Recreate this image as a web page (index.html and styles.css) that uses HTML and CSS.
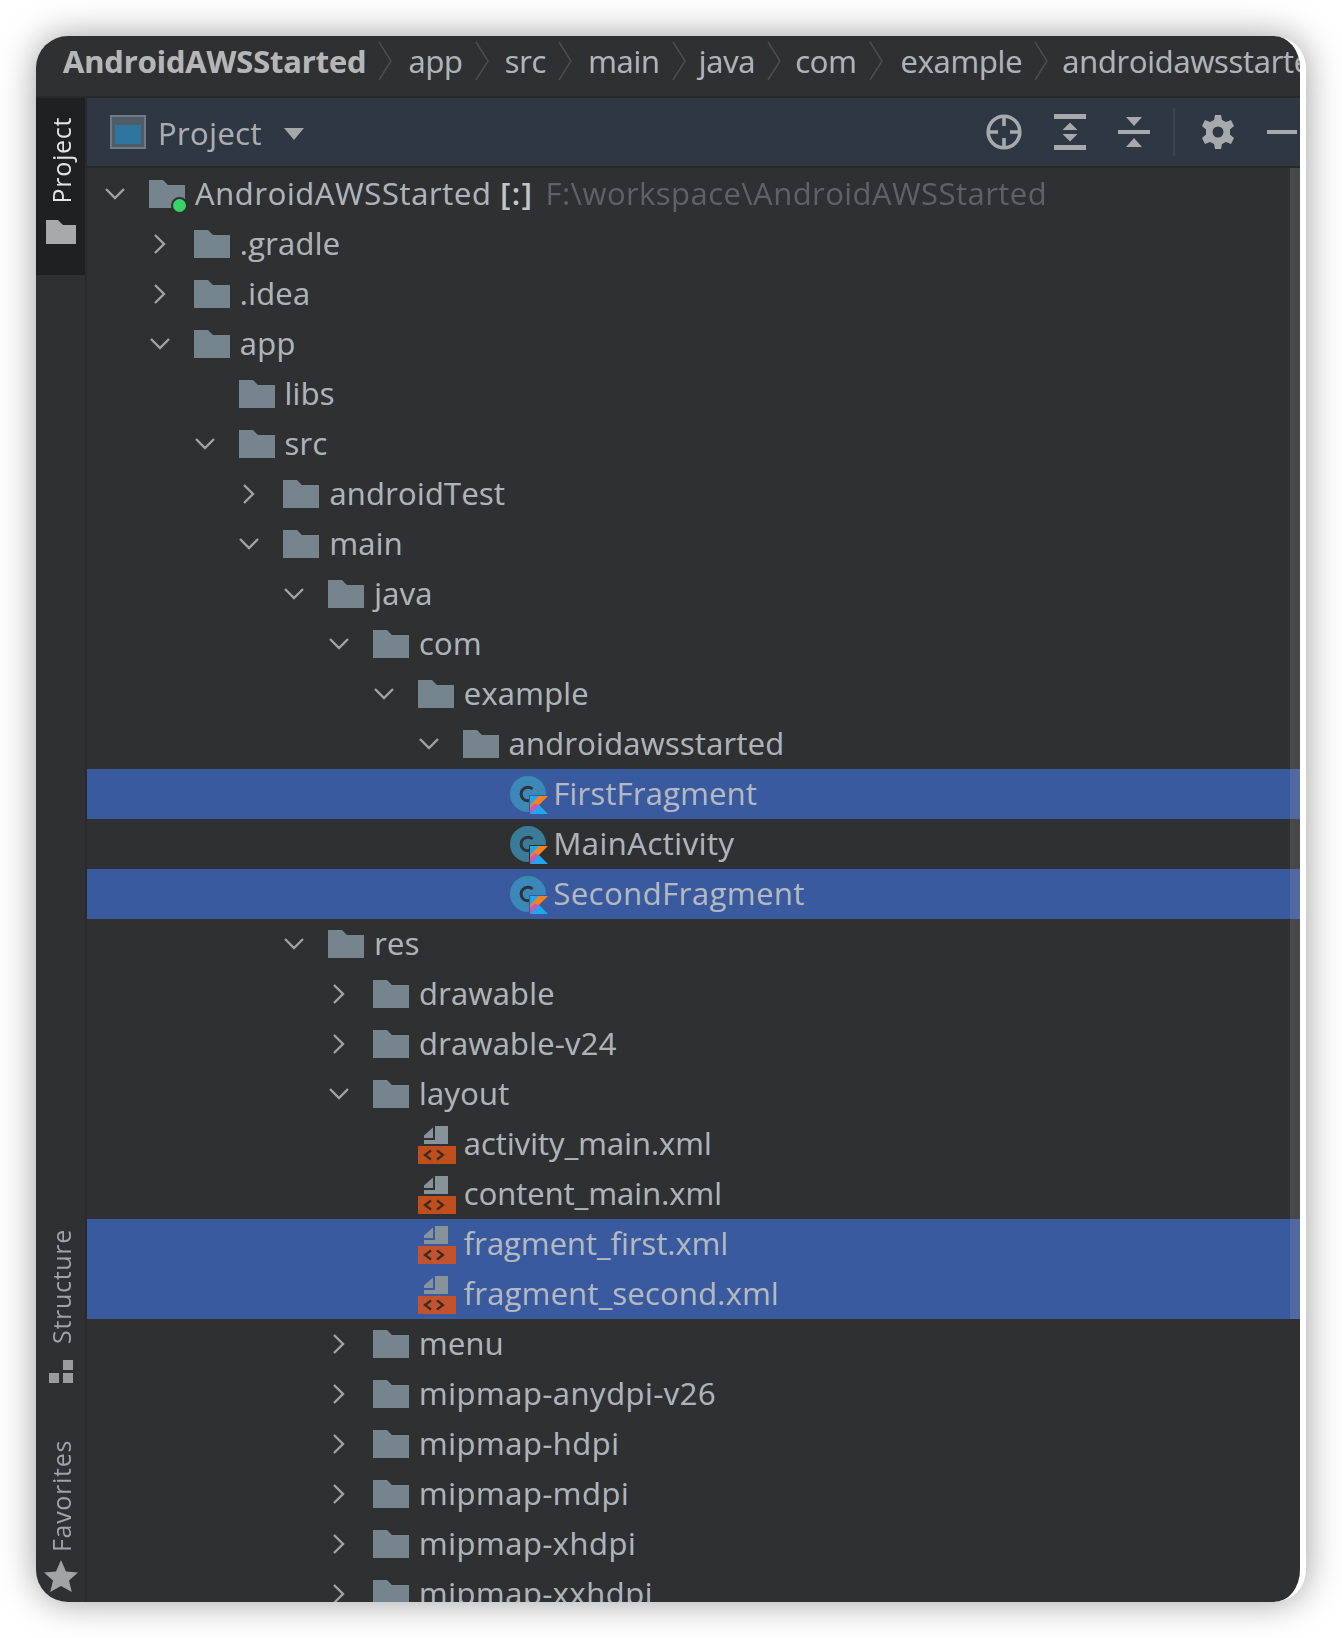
FILE: index.html
```html
<!DOCTYPE html>
<html lang="en">
<head>
<meta charset="utf-8">
<title>AndroidAWSStarted</title>
<link rel="stylesheet" href="styles.css">
</head>
<body>
<svg class="defs" width="0" height="0" aria-hidden="true">
  <symbol id="folder" viewBox="0 0 36 28"><path d="M0 0h14l5 5h17v23H0z" fill="#76848d"/></symbol>
  <symbol id="open" viewBox="0 0 24 24"><path d="M3 7l9 9 9-9" fill="none" stroke="#a0a2a4" stroke-width="2.4"/></symbol>
  <symbol id="closed" viewBox="0 0 24 24"><path d="M7 3l9 9-9 9" fill="none" stroke="#a0a2a4" stroke-width="2.4"/></symbol>
  <symbol id="cls" viewBox="0 0 40 40">
    <circle cx="18" cy="18" r="18" fill="var(--cls)"/>
    <path d="M22.500 13a6.800 6.800 0 1 0 0 10" fill="none" stroke="#2f3236" stroke-width="3"/>
    <path d="M19 19h20v20H19z" fill="var(--kbg)"/>
    <path d="M20 20h18L20 38z" fill="#f58220"/>
    <path d="M20 20h9L20 29z" fill="#1fa8f0"/>
    <path d="M20 38l9-9 9 9z" fill="#1fa8f0"/>
    <path d="M20 38v-6l4.500-4.500 4.500 1.500z" fill="#c757bc"/>
  </symbol>
  <symbol id="xml" viewBox="0 0 38 38">
    <path d="M17 0h13v18H6v-4h11zM15 1.500V12H6V9.500z" fill="#87939b"/>
    <rect x="0" y="20" width="38" height="18" fill="var(--xml)"/>
    <path d="M13 24.500L7 29l6 4.500M19 24.500l6 4.500-6 4.500" fill="none" stroke="#3d2a20" stroke-width="2.200"/>
  </symbol>
</svg>

<main class="window">
  <header class="crumbs">
    <span class="crumb crumb-root">AndroidAWSStarted</span>
    <svg class="sep" viewBox="0 0 14 40"><path d="M1 1l12 19L1 39" fill="none" stroke="#4b4d4f" stroke-width="1.500"/></svg>
    <span class="crumb">app</span>
    <svg class="sep" viewBox="0 0 14 40"><path d="M1 1l12 19L1 39" fill="none" stroke="#4b4d4f" stroke-width="1.500"/></svg>
    <span class="crumb">src</span>
    <svg class="sep" viewBox="0 0 14 40"><path d="M1 1l12 19L1 39" fill="none" stroke="#4b4d4f" stroke-width="1.500"/></svg>
    <span class="crumb">main</span>
    <svg class="sep" viewBox="0 0 14 40"><path d="M1 1l12 19L1 39" fill="none" stroke="#4b4d4f" stroke-width="1.500"/></svg>
    <span class="crumb crumb-java">java</span>
    <svg class="sep" viewBox="0 0 14 40"><path d="M1 1l12 19L1 39" fill="none" stroke="#4b4d4f" stroke-width="1.500"/></svg>
    <span class="crumb crumb-com">com</span>
    <svg class="sep" viewBox="0 0 14 40"><path d="M1 1l12 19L1 39" fill="none" stroke="#4b4d4f" stroke-width="1.500"/></svg>
    <span class="crumb crumb-example">example</span>
    <svg class="sep" viewBox="0 0 14 40"><path d="M1 1l12 19L1 39" fill="none" stroke="#4b4d4f" stroke-width="1.500"/></svg>
    <span class="crumb crumb-com">androidawsstarted</span>
  </header>

  <div class="body">
    <aside class="rail">
      <div class="tab tab-active">
        <span class="tab-label tab-label-active">Project</span>
        <svg class="tab-icon" width="30" height="24" viewBox="0 0 30 24"><path d="M0 0h12l5 5h13v19H0z" fill="#a8a9aa"/></svg>
      </div>
      <div class="tab tab-structure">
        <span class="tab-label">Structure</span>
        <svg class="tab-icon" width="24" height="23" viewBox="0 0 24 23"><path d="M14 0h10v10H14zM0 13h10v10H0zM14 13h10v10H14z" fill="#9a9b9c"/></svg>
      </div>
      <div class="tab tab-favorites">
        <span class="tab-label">Favorites</span>
        <svg class="tab-icon" width="34" height="32" viewBox="0 0 34 32"><path d="M17 0l5 11.500 12 1-9 8 2.800 11.500L17 26l-10.800 6L9 20.500l-9-8 12-1z" fill="#a2a3a4"/></svg>
      </div>
    </aside>

    <section class="panel">
      <div class="toolbar">
        <svg class="pv-icon" width="36" height="34" viewBox="0 0 36 34"><rect x="1" y="1" width="34" height="32" fill="#4f5d68" stroke="#6d7a84" stroke-width="2"/><rect x="5" y="10" width="26" height="19" fill="#2f769f"/></svg>
        <span class="pv-title">Project</span>
        <svg class="pv-caret" width="20" height="12" viewBox="0 0 22 13"><path d="M0 0h22L11 13z" fill="#a4a6a8"/></svg>
        <div class="tools">
          <svg class="tool" width="36" height="36" viewBox="0 0 36 36"><g fill="none" stroke="#a7aaad" stroke-width="3.600"><circle cx="18" cy="18" r="15.800"/><path d="M18 2v10M18 24v10M2 18h10M24 18h10"/></g></svg>
          <svg class="tool" width="32" height="36" viewBox="0 0 32 36"><path d="M0 0h32v5H0zM0 31h32v5H0zM16 8.500l7.500 7.500h-15zM16 27.500L8.500 20h15z" fill="#a7aaad"/></svg>
          <svg class="tool" width="32" height="34" viewBox="0 0 32 34"><path d="M0 15h32v4H0zM16 11L8 2h16zM16 23l-8 9h16z" fill="#a7aaad"/></svg>
          <span class="tool-div"></span>
          <svg class="tool" width="34" height="34" viewBox="0 0 34 34"><path fill="#a7aaad" fill-rule="evenodd" d="M14 0h6l1 5 4 2 5-2 3 6-4 3.500v5l4 3.500-3 6-5-2-4 2-1 5h-6l-1-5-4-2-5 2-3-6 4-3.500v-5L1 11l3-6 5 2 4-2zM17 11.500a5.500 5.500 0 1 0 0 11 5.500 5.500 0 0 0 0-11z"/></svg>
          <svg class="tool tool-min" width="30" height="4" viewBox="0 0 30 4"><rect width="30" height="4" fill="#a7aaad"/></svg>
        </div>
      </div>

      <div class="tree">
        <div class="row d0"><svg class="chev"><use href="#open"/></svg><span class="ic ic-root"><svg class="ic-svg"><use href="#folder"/></svg><i class="dot"></i></span><span class="name name-root">AndroidAWSStarted <b>[:]</b></span><span class="path">F:\workspace\AndroidAWSStarted</span></div>
        <div class="row d1"><svg class="chev"><use href="#closed"/></svg><span class="ic"><svg class="ic-svg"><use href="#folder"/></svg></span><span class="name">.gradle</span></div>
        <div class="row d1"><svg class="chev"><use href="#closed"/></svg><span class="ic"><svg class="ic-svg"><use href="#folder"/></svg></span><span class="name">.idea</span></div>
        <div class="row d1"><svg class="chev"><use href="#open"/></svg><span class="ic"><svg class="ic-svg"><use href="#folder"/></svg></span><span class="name">app</span></div>
        <div class="row d2"><span class="chev"></span><span class="ic"><svg class="ic-svg"><use href="#folder"/></svg></span><span class="name">libs</span></div>
        <div class="row d2"><svg class="chev"><use href="#open"/></svg><span class="ic"><svg class="ic-svg"><use href="#folder"/></svg></span><span class="name">src</span></div>
        <div class="row d3"><svg class="chev"><use href="#closed"/></svg><span class="ic"><svg class="ic-svg"><use href="#folder"/></svg></span><span class="name">androidTest</span></div>
        <div class="row d3"><svg class="chev"><use href="#open"/></svg><span class="ic"><svg class="ic-svg"><use href="#folder"/></svg></span><span class="name">main</span></div>
        <div class="row d4"><svg class="chev"><use href="#open"/></svg><span class="ic"><svg class="ic-svg"><use href="#folder"/></svg></span><span class="name">java</span></div>
        <div class="row d5"><svg class="chev"><use href="#open"/></svg><span class="ic"><svg class="ic-svg"><use href="#folder"/></svg></span><span class="name">com</span></div>
        <div class="row d6"><svg class="chev"><use href="#open"/></svg><span class="ic"><svg class="ic-svg"><use href="#folder"/></svg></span><span class="name">example</span></div>
        <div class="row d7"><svg class="chev"><use href="#open"/></svg><span class="ic"><svg class="ic-svg"><use href="#folder"/></svg></span><span class="name">androidawsstarted</span></div>
        <div class="row d8 sel"><span class="chev"></span><span class="ic ic-cls"><svg class="cls-svg"><use href="#cls"/></svg></span><span class="name">FirstFragment</span></div>
        <div class="row d8"><span class="chev"></span><span class="ic ic-cls"><svg class="cls-svg"><use href="#cls"/></svg></span><span class="name name-wide">MainActivity</span></div>
        <div class="row d8 sel"><span class="chev"></span><span class="ic ic-cls"><svg class="cls-svg"><use href="#cls"/></svg></span><span class="name name-wide">SecondFragment</span></div>
        <div class="row d4"><svg class="chev"><use href="#open"/></svg><span class="ic"><svg class="ic-svg"><use href="#folder"/></svg></span><span class="name">res</span></div>
        <div class="row d5"><svg class="chev"><use href="#closed"/></svg><span class="ic"><svg class="ic-svg"><use href="#folder"/></svg></span><span class="name">drawable</span></div>
        <div class="row d5"><svg class="chev"><use href="#closed"/></svg><span class="ic"><svg class="ic-svg"><use href="#folder"/></svg></span><span class="name">drawable-v24</span></div>
        <div class="row d5"><svg class="chev"><use href="#open"/></svg><span class="ic"><svg class="ic-svg"><use href="#folder"/></svg></span><span class="name">layout</span></div>
        <div class="row d6"><span class="chev"></span><span class="ic ic-xml"><svg class="xml-svg"><use href="#xml"/></svg></span><span class="name name-tight">activity_main.xml</span></div>
        <div class="row d6"><span class="chev"></span><span class="ic ic-xml"><svg class="xml-svg"><use href="#xml"/></svg></span><span class="name name-tight">content_main.xml</span></div>
        <div class="row d6 sel"><span class="chev"></span><span class="ic ic-xml"><svg class="xml-svg"><use href="#xml"/></svg></span><span class="name name-tight">fragment_first.xml</span></div>
        <div class="row d6 sel"><span class="chev"></span><span class="ic ic-xml"><svg class="xml-svg"><use href="#xml"/></svg></span><span class="name">fragment_second.xml</span></div>
        <div class="row d5"><svg class="chev"><use href="#closed"/></svg><span class="ic"><svg class="ic-svg"><use href="#folder"/></svg></span><span class="name">menu</span></div>
        <div class="row d5"><svg class="chev"><use href="#closed"/></svg><span class="ic"><svg class="ic-svg"><use href="#folder"/></svg></span><span class="name name-wide">mipmap-anydpi-v26</span></div>
        <div class="row d5"><svg class="chev"><use href="#closed"/></svg><span class="ic"><svg class="ic-svg"><use href="#folder"/></svg></span><span class="name name-wide">mipmap-hdpi</span></div>
        <div class="row d5"><svg class="chev"><use href="#closed"/></svg><span class="ic"><svg class="ic-svg"><use href="#folder"/></svg></span><span class="name name-wide">mipmap-mdpi</span></div>
        <div class="row d5"><svg class="chev"><use href="#closed"/></svg><span class="ic"><svg class="ic-svg"><use href="#folder"/></svg></span><span class="name name-wide">mipmap-xhdpi</span></div>
        <div class="row d5"><svg class="chev"><use href="#closed"/></svg><span class="ic"><svg class="ic-svg"><use href="#folder"/></svg></span><span class="name name-wide">mipmap-xxhdpi</span></div>
        <span class="scrollbar"></span>
      </div>
    </section>
  </div>
</main>
</body>
</html>
```
FILE: styles.css
```css
* { box-sizing: border-box; }
html, body { margin: 0; height: 100%; background: #fff; }
body {
  width: 1342px;
  height: 1638px;
  padding: 36px;
  overflow: hidden;
  font-family: "Open Sans", "Noto Sans", sans-serif;
  color: #acb3ba;
}
.defs { position: absolute; }

.window {
  width: 1270px;
  height: 1566px;
  background: #2f3031;
  border-radius: 32px;
  overflow: hidden;
  border-right: 6px solid #fff;
  box-shadow: 0 0 36px rgba(0, 0, 0, .38);
  display: flex;
  flex-direction: column;
}

.crumbs {
  height: 62px;
  flex: none;
  display: flex;
  align-items: center;
  padding: 0 0 10px 27px;
  border-bottom: 2px solid #272829;
  overflow: hidden;
  white-space: nowrap;
}
.crumb {
  font-size: 31px;
  letter-spacing: -.3px;
  filter: blur(.5px);
  flex: none;
  text-shadow: -.6px 0 rgba(190, 130, 70, .35), .6px 0 rgba(70, 130, 200, .35);
}
.crumb-root { font-weight: 700; letter-spacing: -.2px; color: #b4b6b8; }
.crumb-java { margin-left: -3px; }
.crumb-com { margin-left: -2px; }
.crumb-example { margin-left: 2px; }
.sep { width: 14px; height: 40px; flex: none; margin: 0 16px 0 12px; }

.body { flex: 1; display: flex; min-height: 0; }

.rail {
  width: 51px;
  flex: none;
  display: flex;
  flex-direction: column;
  border-right: 2px solid #292a2b;
}
.tab { display: flex; flex-direction: column; align-items: center; }
.tab-active { background: #1f2021; height: 177px; padding-top: 19px; gap: 17px; }
.tab-structure { margin-top: auto; gap: 16px; }
.tab-favorites { margin-top: 57px; gap: 8px; padding-bottom: 10px; }
.tab-label {
  writing-mode: vertical-rl;
  transform: rotate(180deg);
  font-size: 25px;
  letter-spacing: .7px;
  line-height: 26px;
  color: #9ea3a7;
  filter: blur(.4px);
}
.tab-label-active { color: #e4e4e4; }
.tab-icon { flex: none; filter: blur(.5px); }

.panel { flex: 1; min-width: 0; display: flex; flex-direction: column; }
.toolbar {
  height: 70px;
  flex: none;
  background: #2e3742;
  border-bottom: 2px solid #26282a;
  display: flex;
  align-items: center;
  padding-left: 23px;
}
.pv-icon { flex: none; }
.pv-title {
  font-size: 31px;
  letter-spacing: .4px;
  margin: 2px 0 0 12px;
  color: #a9adb1;
  filter: blur(.4px);
  text-shadow: -.6px 0 rgba(190, 130, 70, .3), .6px 0 rgba(70, 130, 200, .3);
}
.pv-caret { flex: none; margin-left: 22px; margin-top: 4px; }
.tools { margin-left: auto; display: flex; align-items: center; padding-right: 3px; }
.tool { flex: none; filter: blur(.5px); }
.tool + .tool { margin-left: 32px; }
.tool-div { width: 2px; height: 48px; background: #3b444e; margin: 0 26px 0 23px; }
.tool-div + .tool { margin-left: 0; }
.tool-min { margin-left: 34px; }

.tree { flex: 1; min-height: 0; overflow: hidden; position: relative; padding-top: 1px; }
.scrollbar {
  position: absolute;
  top: 0;
  right: 0;
  height: 1151px;
  width: 10px;
  background: rgba(170, 170, 170, .2);
}
.row {
  height: 50px;
  display: flex;
  align-items: center;
  white-space: nowrap;
}
.sel { background: #3a5a9f; color: #b1b9c4; --cls: #3c88b8; --xml: #c2532e; --kbg: #3a5a9f; }
.row:not(.sel) { --cls: #3a7c98; --xml: #c04f1e; --kbg: #2f3031; }
.d0 { padding-left: 16px; }
.d1 { padding-left: 60.800px; }
.d2 { padding-left: 105.600px; }
.d3 { padding-left: 150.400px; }
.d4 { padding-left: 195.200px; }
.d5 { padding-left: 240px; }
.d6 { padding-left: 284.800px; }
.d7 { padding-left: 329.600px; }
.d8 { padding-left: 374.400px; }

.chev { width: 24px; height: 24px; margin-right: 22px; flex: none; filter: blur(.4px); }
.ic { width: 36px; height: 38px; flex: none; position: relative; display: flex; align-items: center; }
.ic-svg { width: 36px; height: 28px; filter: blur(.4px); }
.cls-svg { width: 40px; height: 40px; flex: none; margin: 3px 0 0 3px; filter: blur(.4px); }
.xml-svg { width: 38px; height: 38px; flex: none; margin-top: 2px; filter: blur(.4px); }
.dot {
  position: absolute;
  right: -1px;
  bottom: 1px;
  width: 13px;
  height: 13px;
  border-radius: 50%;
  background: #35d467;
  box-shadow: 0 0 0 2px #2f3031;
}
.name {
  margin-left: 10px;
  padding-bottom: 2px;
  font-size: 31px;
  letter-spacing: .2px;
  filter: blur(.5px);
  text-shadow: -.6px 0 rgba(190, 130, 70, .35), .6px 0 rgba(70, 130, 200, .35);
}
.name-root { letter-spacing: .6px; }
.name-wide { letter-spacing: .5px; }
.name-tight { letter-spacing: 0; }
.name b { font-weight: 600; letter-spacing: 1.5px; color: #c2c5c8; }
.path {
  margin-left: 12px;
  padding-bottom: 2px;
  font-size: 31px;
  letter-spacing: .45px;
  color: #5f6264;
  filter: blur(.5px);
}
```
